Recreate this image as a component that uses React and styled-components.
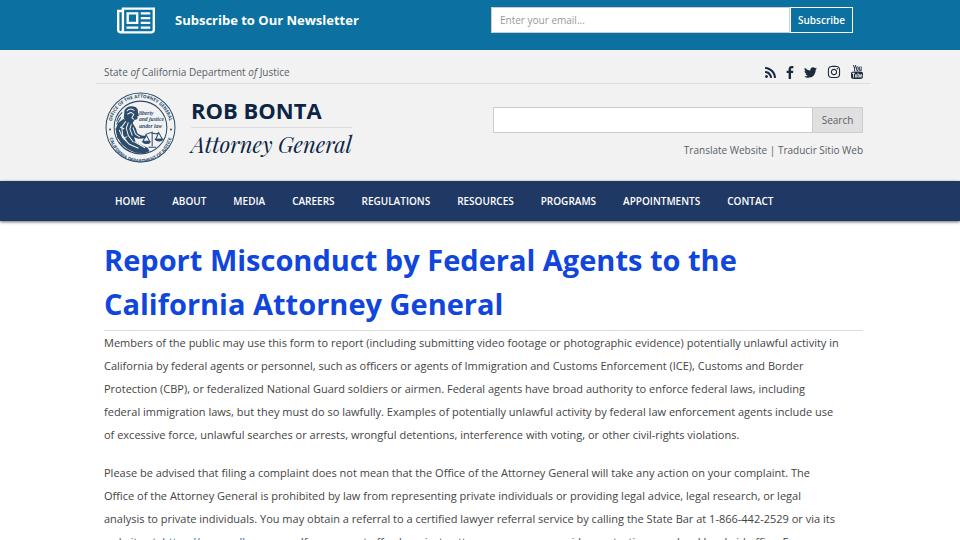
import React from 'react'
import styled, { createGlobalStyle } from 'styled-components'
import { FaInstagram } from 'react-icons/fa'

const navItems = [
	'Home',
	'About',
	'Media',
	'Careers',
	'Regulations',
	'Resources',
	'Programs',
	'Appointments',
	'Contact',
]

function NewspaperIcon() {
	return (
		<svg width="38" height="27" viewBox="0 120 2048 1424" fill="currentColor" aria-hidden="true">
			<path d="M1024 512h-384v384h384v-384zM1152 1152v128h-640v-128h640zM1152 384v640h-640v-640h640zM1792 1152v128h-512v-128h512zM1792 896v128h-512v-128h512zM1792 640v128h-512v-128h512zM1792 384v128h-512v-128h512zM256 1344v-960h-128v960q0 26 19 45t45 19 45-19 19-45zM1920 1344v-1088h-1536v1088q0 33-11 64h1483q26 0 45-19t19-45zM2048 128v1216q0 80-56 136t-136 56h-1664q-80 0-136-56t-56-136v-1088h256v-128h1792z" />
		</svg>
	)
}

function RssIcon() {
	return (
		<svg width="11" height="11" viewBox="192 128 1410 1410" fill="currentColor" aria-hidden="true">
			<path d="M576 1344q0 80-56 136t-136 56-136-56-56-136 56-136 136-56 136 56 56 136zm512 123q2 28-17 48-18 21-47 21h-135q-25 0-43-16.500t-20-41.500q-22-229-184.500-391.500t-391.500-184.500q-25-2-41.500-20t-16.500-43v-135q0-29 21-47 17-17 43-17h5q160 13 306 80.500t259 181.500q114 113 181.500 259t80.500 306zm512 2q2 27-18 47-18 20-46 20h-143q-26 0-44.500-17.500t-19.500-42.500q-12-215-101-408.500t-231.500-336-336-231.500-408.500-102q-25-1-42.500-19.500t-17.500-43.500v-143q0-28 20-46 18-18 44-18h3q262 13 501.500 120t425.500 294q187 186 294 425.500t120 501.500z" />
		</svg>
	)
}

function FacebookIcon() {
	return (
		<svg width="8" height="13" viewBox="440 0 940 1664" fill="currentColor" aria-hidden="true">
			<path d="M1343 12v264h-157q-86 0-116 36t-30 108v189h293l-39 296h-254v759h-306v-759h-255v-296h255v-218q0-186 104-288.500t277-102.500q147 0 228 12z" />
		</svg>
	)
}

function TwitterIcon() {
	return (
		<svg width="13" height="11" viewBox="108 256 1576 1280" fill="currentColor" aria-hidden="true">
			<path d="M1684 408q-67 98-162 167 1 14 1 42 0 130-38 259.500t-115.500 248.500-184.500 210.500-258 146-323 54.500q-271 0-496-145 35 4 78 4 225 0 401-138-105-2-188-64.500t-114-159.500q33 5 61 5 43 0 85-11-112-23-185.500-111.500t-73.500-205.500v-4q68 38 146 41-66-44-105-115t-39-154q0-88 44-163 121 149 294.500 238.500t371.500 99.500q-8-38-8-74 0-134 94.500-228.500t228.500-94.500q140 0 236 102 109-21 205-78-37 115-142 178 93-10 186-50z" />
		</svg>
	)
}

function YoutubeIcon() {
	return (
		<svg width="12" height="14" viewBox="0 0 24 28" fill="currentColor" aria-hidden="true">
			<path d="M4 0h2l1.300 5L8.600 0h2L8.200 7v5H6.300V7z" />
			<path
				fillRule="evenodd"
				d="M12.800 3c1.600 0 2.400 1 2.400 2.400v4.300c0 1.500-.8 2.400-2.400 2.400s-2.400-.9-2.400-2.400V5.400C10.400 4 11.200 3 12.800 3zm0 1.600c-.4 0-.6.3-.6.800v4.300c0 .5.200.8.600.8s.6-.3.600-.8V5.400c0-.5-.2-.8-.6-.8z"
			/>
			<path d="M16.500 3h1.700v6.800c0 .8.600.7 1.300-.1V3h1.700v9h-1.700v-1c-1.200 1.400-3 1.500-3-.6z" />
			<path
				fillRule="evenodd"
				d="M3 13.300c6-.5 12-.5 18 0 1.700.2 2.600 1.200 2.800 2.700.3 2.700.3 6 0 8.700-.2 1.500-1.100 2.600-2.800 2.800-6 .6-12 .6-18 0-1.700-.2-2.600-1.300-2.800-2.800-.3-2.700-.3-6 0-8.700.2-1.500 1.100-2.500 2.800-2.700zM2.200 15.600v1.700h1.900V25h1.700v-7.700h1.900v-1.700zM8 18.300v5.500c0 1.600 1.600 1.600 2.700.4v.8h1.500v-6.700h-1.500v4.900c-.6.700-1.200.8-1.200 0v-4.900zM13.300 15.600V25h1.500v-.7c1.100 1.300 2.800.9 2.800-1.100v-3.100c0-2-1.700-2.600-2.800-1.200v-3.300zm1.500 4.500c.5-.6 1.300-.5 1.300.3v2.600c0 .8-.8.900-1.300.3zM18.400 20.600v2.300c0 2.900 4 2.900 4 0v-.5h-1.500c0 1.600-1 1.600-1 .3v-.7h2.500v-1.400c0-3-4-3-4 0zm1.500.2c0-1.300 1-1.300 1 0z"
			/>
		</svg>
	)
}

function Seal() {
	return (
		<SealSvg viewBox="0 0 140 140" role="img" aria-label="Office of the Attorney General seal">
			<defs>
				<path id="sealTop" d="M15 88 A58 58 0 1 1 125 88" />
				<path id="sealBottom" d="M7 76 A63 63 0 0 0 133 76" />
			</defs>
			<g fill="none" stroke="#2b4c6b">
				<circle cx="70" cy="70" r="68" strokeWidth="2" />
				<circle cx="70" cy="70" r="52" strokeWidth="2" />
			</g>
			<SealText>
				<textPath href="#sealTop" startOffset="50%" textAnchor="middle">
					OFFICE OF THE ATTORNEY GENERAL
				</textPath>
			</SealText>
			<SealText>
				<textPath href="#sealBottom" startOffset="50%" textAnchor="middle">
					CALIFORNIA DEPARTMENT OF JUSTICE
				</textPath>
			</SealText>
			{/* head and hair */}
			<path
				fill="#2b4c6b"
				d="M38 42c-1-9 7-15 15-14 9 0 13 6 12 12l2 7-3 1v5l-6 2-4 7-12-3-5-8z"
			/>
			{/* robe */}
			<path
				fill="#2b4c6b"
				d="M36 53l10 3 9 6 6 10 3 10 8 4 10 1-2 4-14 1-9-3 4 10 12 6 11 5 4 7-10 4-18-1-15-7-12-10-9-15-3-15 5-12z"
			/>
			<g fill="none" stroke="#f2f2f2" strokeWidth="2">
				<path d="M43 38c5-6 11-5 15-1M44 44l7-4 6 4M57 44l-4 7 4 3M41 58l-8 11 2 17 9 13M46 60l-4 11 4 15 10 13M52 64l-3 9 5 13M28 75l7 15 13 13 18 8M55 70l5 13 9 6M58 98l21 12" />
				<path d="M30 69l8 4M36 91l8-3" />
			</g>
			<g fill="none" stroke="#2b4c6b" strokeWidth="2">
				<path d="M34 40l-7 8-4 10M31 50l-8 14M22 72l4 20M93 78v29M80 84c6-2 8-5 13-3 5 2 10 2 14-1M81 84l-6 13h13zM106 80l-6 13h13zM86 109h15M27 99l11 12 13 7" />
				<path d="M74 98h15c-2 5-12 5-15 0zM99 93h15c-2 5-12 5-15 0z" fill="#2b4c6b" />
			</g>
			<MottoText x="67" y="45">liberty</MottoText>
			<MottoText x="67" y="58">and justice</MottoText>
			<MottoText x="67" y="71">under law</MottoText>
			<circle cx="10" cy="74" r="2" fill="#2b4c6b" />
			<circle cx="130" cy="74" r="2" fill="#2b4c6b" />
		</SealSvg>
	)
}

function App() {
	return (
		<>
			<GlobalStyle />
			<Banner>
				<BannerInner>
					<NewspaperIcon />
					<BannerTitle>Subscribe to Our Newsletter</BannerTitle>
					<SubscribeForm onSubmit={e => e.preventDefault()}>
						<EmailInput type="email" placeholder="Enter your email..." aria-label="Email" />
						<SubscribeButton type="submit">Subscribe</SubscribeButton>
					</SubscribeForm>
				</BannerInner>
			</Banner>

			<Header>
				<TopRow>
					<div>
						State <em>of</em> California Department <em>of</em> Justice
					</div>
					<Social>
						<a href="#rss" aria-label="RSS"><RssIcon /></a>
						<a href="#facebook" aria-label="Facebook"><FacebookIcon /></a>
						<a href="#twitter" aria-label="Twitter"><TwitterIcon /></a>
						<a href="#instagram" aria-label="Instagram"><FaInstagram size={14} /></a>
						<a href="#youtube" aria-label="YouTube"><YoutubeIcon /></a>
					</Social>
				</TopRow>
				<Brand>
					<Seal />
					<Names>
						<PersonName>ROB BONTA</PersonName>
						<PersonTitle>Attorney General</PersonTitle>
					</Names>
					<SearchArea>
						<SearchForm onSubmit={e => e.preventDefault()}>
							<SearchInput type="text" aria-label="Search" />
							<SearchButton type="submit">Search</SearchButton>
						</SearchForm>
						<div>
							<a href="#translate">Translate Website</a> | <a href="#traducir">Traducir Sitio Web</a>
						</div>
					</SearchArea>
				</Brand>
			</Header>

			<Nav>
				{navItems.map(item => (
					<NavLink key={item} href={`#${item.toLowerCase()}`}>
						{item}
					</NavLink>
				))}
			</Nav>

			<Main>
				<Title>Report Misconduct by Federal Agents to the California Attorney General</Title>
				<Paragraph>
					Members of the public may use this form to report (including submitting video footage or
					photographic evidence) potentially unlawful activity in California by federal agents or
					personnel, such as officers or agents of Immigration and Customs Enforcement (ICE),
					Customs and Border Protection (CBP), or federalized National Guard soldiers or airmen.
					Federal agents have broad authority to enforce federal laws, including federal
					immigration laws, but they must do so lawfully. Examples of potentially unlawful activity
					by federal law enforcement agents include use of excessive force, unlawful searches or
					arrests, wrongful detentions, interference with voting, or other civil-rights violations.
				</Paragraph>
				<Paragraph>
					Please be advised that filing a complaint does not mean that the Office of the Attorney
					General will take any action on your complaint. The Office of the Attorney General is
					prohibited by law from representing private individuals or providing legal advice, legal
					research, or legal analysis to private individuals. You may obtain a referral to a
					certified lawyer referral service by calling the State Bar at 1-866-442-2529 or via its
					website at: <TextLink href="#calbar">https://www.calbar.ca.gov</TextLink>. If you cannot
					afford a private attorney, you may consider contacting your local legal aid office. For a
				</Paragraph>
			</Main>
		</>
	)
}

const GlobalStyle = createGlobalStyle`
	* {
		box-sizing: border-box;
	}
	body {
		margin: 0;
		background: #fff;
		color: #444;
		font-family: 'Open Sans', sans-serif;
		font-size: 11px;
	}
	a {
		color: inherit;
		text-decoration: none;
	}
`

const Banner = styled.div`
	height: 50px;
	padding: 0 107px 0 117px;
	background: #0c71a0;
	color: #fff;
`
const BannerInner = styled.div`
	display: flex;
	align-items: center;
	height: 40px;
`
const BannerTitle = styled.div`
	flex: 1;
	padding-left: 20px;
	font-size: 13px;
	font-weight: 700;
`
const SubscribeForm = styled.form`
	display: flex;
	flex: 0 0 362px;
	height: 26px;
`
const EmailInput = styled.input`
	flex: 1;
	min-width: 0;
	padding: 0 8px;
	border: 1px solid #ccc;
	background: #fff;
	font-family: inherit;
	font-size: 10px;

	&::placeholder {
		color: #999;
	}
`
const SubscribeButton = styled.button`
	width: 63px;
	padding: 0;
	border: 1px solid #fff;
	background: #0c71a0;
	color: #fff;
	font-family: inherit;
	font-size: 10px;
	font-weight: 600;
`

const Header = styled.header`
	padding: 0 89px 0 96px;
	background: #f2f2f2;
	color: #586068;
	font-size: 10px;
`
const TopRow = styled.div`
	display: flex;
	align-items: flex-end;
	justify-content: space-between;
	height: 34px;
	padding: 0 8px 4px;
	border-bottom: 1px solid #ddd;
`
const Social = styled.div`
	display: flex;
	align-items: center;
	gap: 10px;
	color: #1b2a3d;

	a {
		display: flex;
	}
`
const Brand = styled.div`
	display: flex;
	height: 97px;
	padding: 8px 8px 0 9px;
`
const SealSvg = styled.svg`
	flex: none;
	width: 71px;
	height: 71px;
`
const SealText = styled.text`
	fill: #2b4c6b;
	font-family: 'Open Sans', sans-serif;
	font-size: 9px;
	font-weight: 700;
`
const MottoText = styled.text`
	fill: #2b4c6b;
	font-family: 'Liberation Serif', serif;
	font-size: 11px;
	font-style: italic;
	font-weight: 700;
`
const Names = styled.div`
	padding: 3px 0 0 15px;
	color: #0d2544;
`
const PersonName = styled.div`
	padding-bottom: 2px;
	border-bottom: 1px solid #ddd;
	font-size: 22px;
	font-weight: 700;
	line-height: 30px;
`
const PersonTitle = styled.div`
	font-family: 'Playfair Display', 'Liberation Serif', serif;
	font-size: 22px;
	font-style: italic;
	line-height: 32px;
`
const SearchArea = styled.div`
	flex: 0 0 370px;
	margin-left: auto;
	padding-top: 15px;
	text-align: right;
`
const SearchForm = styled.form`
	display: flex;
	height: 26px;
	margin-bottom: 10px;
`
const SearchInput = styled.input`
	flex: 1;
	min-width: 0;
	border: 1px solid #ccc;
	background: #fff;
	font-family: inherit;
`
const SearchButton = styled.button`
	width: 50px;
	padding: 0;
	border: 1px solid #ccc;
	border-left: none;
	background: #e0e0e0;
	color: #586068;
	font-family: inherit;
	font-size: 10px;
`

const Nav = styled.nav`
	display: flex;
	align-items: center;
	gap: 27px;
	height: 40px;
	padding: 0 115px;
	background: #1f3864;
	box-shadow: 0 1px 3px rgba(0, 0, 0, 0.6);
`
const NavLink = styled.a`
	color: #fff;
	font-size: 10px;
	font-weight: 600;
	text-transform: uppercase;
`

const Main = styled.main`
	padding: 17px 97px 0 104px;
`
const Title = styled.h1`
	margin: 0;
	padding-bottom: 4px;
	border-bottom: 1px solid #ddd;
	color: #1046dc;
	font-size: 29px;
	font-weight: 700;
	line-height: 44px;
`
const Paragraph = styled.p`
	margin: 0 0 15px;
	padding-right: 22px;
	line-height: 23px;
`
const TextLink = styled.a`
	color: #1f5fa8;
`

export default App
